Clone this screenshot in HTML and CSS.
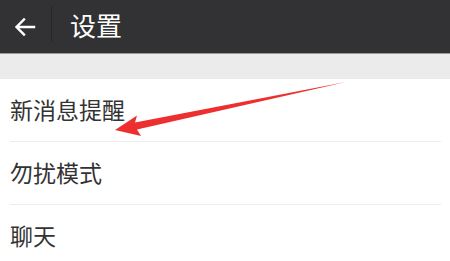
FILE: index.html
```html
<!DOCTYPE html>
<html lang="zh">
<head>
<meta charset="utf-8">
<link rel="stylesheet" href="styles.css">
</head>
<body>
<div class="page">
  <header class="bar">
    <div class="back">
      <svg width="22" height="20" viewBox="0 0 22 20"><path d="M20 10H3M10 2.5L2.5 10L10 17.5" fill="none" stroke="#fff" stroke-width="2.4" stroke-linecap="square"/></svg>
    </div>
    <div class="sep"></div>
    <div class="title">设置</div>
  </header>
  <div class="gap"></div>
  <ul class="list">
    <li class="row">新消息提醒</li>
    <li class="row">勿扰模式</li>
    <li class="row">聊天</li>
  </ul>
  <svg class="annot" width="450" height="261" viewBox="0 0 450 261">
    <polygon points="115,130 141,136 137,129.5 346,82 135,122.5 137,115.5" fill="#ee2f2f"/>
  </svg>
</div>
</body>
</html>
```
FILE: styles.css
```css
html, body { margin: 0; padding: 0; }
body { background: #fff; font-family: "Noto Sans CJK SC", "Noto Sans", sans-serif; }
.page { position: relative; width: 450px; height: 261px; overflow: hidden; }
.bar { height: 53px; background: #323235; display: flex; align-items: center; border-bottom: 1px solid #9a9a9a; box-sizing: content-box; }
.back { width: 53px; display: flex; justify-content: center; padding-top: 1px; margin-left: -2px; }
.sep { width: 1px; height: 36px; background: #262628; margin-top: -6px; }
.title { color: #fff; font-size: 26px; margin-left: 18px; line-height: 1; margin-top: -4px; }
.gap { height: 25px; background: #ebebeb; }
.list { list-style: none; margin: 0; padding: 0 9px 0 10px; }
.row { height: 63px; display: flex; align-items: center; font-size: 23px; color: #333; border-bottom: 1px solid #ececec; padding-bottom: 3px; box-sizing: border-box; }
.row:last-child { border-bottom: none; }
.annot { position: absolute; left: 0; top: 0; }
```
